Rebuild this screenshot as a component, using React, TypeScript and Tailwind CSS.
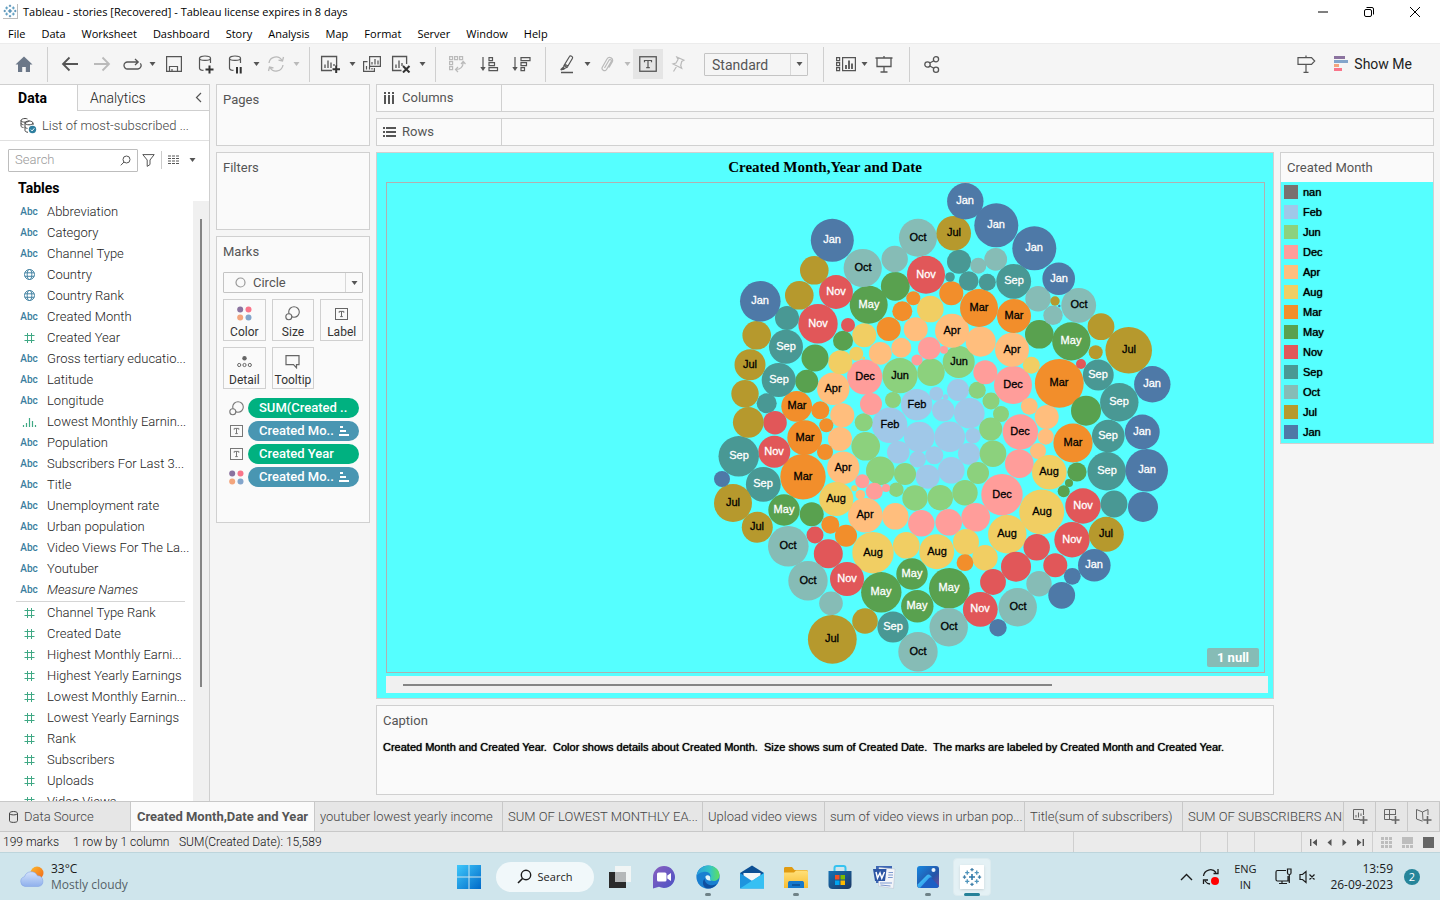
import type { ReactNode } from 'react';

type Month = 'nan' | 'Feb' | 'Jun' | 'Dec' | 'Apr' | 'Aug' | 'Mar' | 'May' | 'Nov' | 'Sep' | 'Oct' | 'Jul' | 'Jan';
type Bubble = [x: number, y: number, r: number, labelled?: 1];

const COLORS: Record<Month, string> = {
  nan: '#79706e', Feb: '#a0c8e8', Jun: '#8cd17d', Dec: '#ff9d9a', Apr: '#ffbe7d', Aug: '#f1ce63', Mar: '#f28e2b',
  May: '#59a14f', Nov: '#e15759', Sep: '#499894', Oct: '#86bcb6', Jul: '#b6992d', Jan: '#4e79a7',
};

const LIGHT_LABELS: Month[] = ['Jan', 'Nov', 'Sep', 'May'];

const BUBBLES: Partial<Record<Month, Bubble[]>> = {
  Feb: [
    [916.7, 404.7, 15.7, 1], [889.7, 425.3, 17.7, 1], [958, 390, 11], [936.3, 393.7, 7], [945.7, 397, 2.7], [943.3, 410.3, 11.2],
    [969.3, 413.3, 15.3], [949.7, 436.7, 15.3], [969, 453.7, 11], [973, 435.7, 7.7], [934.3, 455.3, 9], [951.3, 470.3, 13.3],
    [927.7, 476.7, 12], [919.3, 437, 15.3], [898.3, 452.3, 11.3], [917.7, 459.3, 8.3],
  ],
  Jun: [
    [900, 375.7, 17.6, 1], [931, 372.3, 13.7], [893, 400, 8], [863.7, 422.3, 9], [958.7, 362, 16, 1], [977.3, 390.3, 8.5],
    [991, 401, 8.5], [1001, 414, 8], [990.7, 429, 11.5], [993, 453.7, 13.3], [978, 473, 11], [965, 492.7, 12.7], [940.3, 497.7, 12.7],
    [865.7, 446.3, 14.3], [880.3, 470.7, 14.3], [905, 474, 11], [896.3, 489.7, 7.3], [915, 498, 12.7],
  ],
  Dec: [
    [864.7, 377, 17.6, 1], [917, 360, 5.6], [929.3, 348.3, 11.3], [944, 349.7, 4], [871, 404, 11], [985.3, 372.3, 12],
    [1013, 385, 19, 1], [1020.3, 432, 17.7, 1], [1019.3, 463.7, 14.3], [1002, 494.7, 20.7, 1], [975.7, 517.3, 14.3],
    [948.7, 522.3, 13.3], [862.3, 481.3, 7], [874.3, 491.3, 8.5], [886, 488, 4], [921.3, 523.3, 13.2],
  ],
  Apr: [
    [915.7, 329.3, 12], [901.3, 347.7, 10], [880.3, 353.3, 11.4], [833.3, 388.7, 16.2, 1], [842.3, 415.3, 12], [952, 330.7, 17, 1],
    [980.7, 341.7, 15], [1012, 349.7, 17, 1], [1029.3, 406.3, 8.4], [1046.7, 417, 12], [1045.7, 436.7, 8], [1038, 451, 8],
    [840, 439, 12], [843.3, 467.7, 16.2, 1], [860.3, 494.7, 4.8], [865.3, 515.3, 17.3, 1], [895.3, 516.3, 13.2],
  ],
  Aug: [
    [930.3, 309, 13.3], [864.3, 335.3, 12], [856.3, 353.7, 7], [863.7, 358, 1.5], [840.3, 362.3, 12], [1031.3, 365.3, 8.5],
    [1049.3, 472.3, 17.3, 1], [1041.7, 512, 22.5, 1], [1007.3, 534.3, 19.2, 1], [966, 542, 13], [985, 557.7, 12.7],
    [936.7, 551.7, 17.5, 1], [836.3, 499, 17.1, 1], [854.3, 488.3, 3], [873, 552.7, 20.7, 1], [906.3, 545.3, 13.3],
  ],
  Mar: [
    [913.3, 298.3, 7], [902.3, 311.3, 10], [888.7, 329, 12], [796.7, 406.3, 15.4, 1], [820.3, 410.3, 9], [826.3, 425.3, 7],
    [804.7, 437.7, 17.4, 1], [825, 452, 8], [803, 476.7, 22.7, 1], [830.3, 524.7, 9], [846, 535.7, 11], [951.3, 293.3, 12],
    [979, 308, 19, 1], [1014, 316, 17, 1], [1059.3, 383.3, 24.4, 1], [1073, 443, 19.6, 1], [965, 562.7, 8.4],
  ],
  May: [
    [868.7, 304.7, 19, 1], [895.3, 286.3, 14.4], [843, 340.7, 10], [815, 358, 13.5], [806.7, 381.3, 11.5], [1039.3, 334.3, 14.3],
    [1071.3, 341.3, 19.1, 1], [1086, 410.7, 15], [1077, 472, 9.6], [1069, 483, 4], [1063.7, 491.3, 6], [784, 510, 15.7, 1],
    [811.7, 514.3, 12], [912, 574, 15.7, 1], [881.3, 592.3, 20.2, 1], [917.3, 606.3, 16.2, 1], [949.3, 588.3, 20.3, 1],
  ],
  Nov: [
    [926, 274.7, 19, 1], [836, 292, 16.9, 1], [818, 323.7, 19.7, 1], [848, 325, 7], [775, 422.7, 11.8], [774.3, 451.7, 16, 1],
    [1081, 364, 5], [1083, 506, 17.7, 1], [1072, 539.7, 17.7, 1], [1036.7, 547.3, 13.2], [1016, 566.7, 15], [1055.3, 565.3, 12],
    [993, 582, 12.9], [980.3, 609.3, 17.4, 1], [815, 535, 8.5], [828.3, 553.7, 14.5], [847, 579, 17, 1],
  ],
  Sep: [
    [787, 318, 12], [786, 346.7, 17, 1], [778.7, 380, 17, 1], [766.7, 403.3, 10], [959, 261.7, 12], [950, 277, 4.8],
    [968.7, 281, 9.8], [987.3, 282.3, 8.5], [1013.7, 281.3, 17.4, 1], [1098.3, 375, 15.4, 1], [1119.3, 402.3, 19.2, 1],
    [1108.3, 436, 16.3, 1], [1106.7, 471.3, 19.2, 1], [1114, 504, 13.4], [738.7, 456.3, 20.2, 1], [763.3, 484.3, 17.4, 1], [893, 627, 15.6, 1],
  ],
  Oct: [
    [918, 237.7, 19, 1], [862.7, 268, 19.1, 1], [894.7, 259, 13.2], [978.3, 265.7, 8], [995.7, 259.3, 11.4], [1038, 298.7, 12.7],
    [1053, 315.3, 9.7], [1078.7, 305.3, 17.4, 1], [1039, 583.7, 12.7], [1017.7, 607.3, 19.2, 1], [948.7, 627.3, 19.2, 1],
    [788.3, 546.3, 20.3, 1], [808, 580.7, 19.7, 1], [831, 603.3, 11.8], [918, 651.7, 19.7, 1],
  ],
  Jul: [
    [814.3, 270.3, 14.3], [799.3, 295.3, 14.3], [756.7, 335.3, 14.3], [750, 364.7, 15.5, 1], [745, 393.7, 13.7], [748.3, 422.3, 15.4],
    [953.7, 233.3, 17.3, 1], [1055, 301, 4.7], [1101, 326.7, 13.4], [1095.7, 352.3, 7], [1128.7, 350.3, 23.3, 1], [1106.3, 534.3, 17.5, 1],
    [733, 503, 19, 1], [757.3, 527.3, 15.5, 1], [832.3, 639.3, 24.4, 1], [865, 621, 12.8],
  ],
  Jan: [
    [832.3, 240.3, 21.5, 1], [760.3, 301.3, 20.3, 1], [965.3, 201.3, 18.2, 1], [996.3, 225.3, 22, 1], [1034.3, 248.3, 22, 1],
    [1058.7, 278.7, 16.3, 1], [1059.3, 306, 1.2], [1152.3, 384.3, 18.2, 1], [1142.3, 432, 17.4, 1], [1146.7, 470.3, 21.3, 1],
    [1143, 507, 15], [1094.3, 565.3, 16.3, 1], [1072.3, 576.3, 8.4], [1061.7, 595.3, 13.4], [998, 627.7, 8.7], [722, 479, 8],
  ],
};

const MONTHS = Object.keys(COLORS) as Month[];

function BubbleChart() {
  const entries = MONTHS.flatMap((m) => (BUBBLES[m] ?? []).map((b) => ({ m, b })));
  return (
    <svg viewBox="387 183 877 489" preserveAspectRatio="xMidYMid meet" className="block h-full w-full" role="img" aria-label="Packed bubbles by created month">
      {entries.map(({ m, b }, i) => (
        <circle key={i} cx={b[0]} cy={b[1]} r={b[2]} fill={COLORS[m]} />
      ))}
      {entries.filter(({ b }) => b[3]).map(({ m, b }, i) => {
        const ink = LIGHT_LABELS.includes(m) ? '#ffffff' : '#000000';
        return (
          <text key={i} x={Math.round(b[0])} y={Math.round(b[1] + 3)} textAnchor="middle" fill={ink} stroke={ink} strokeWidth="0.3" className="text-[11px]">
            {m}
          </text>
        );
      })}
    </svg>
  );
}

function Ico({ w, h, children, className = '' }: { w: number; h: number; children: ReactNode; className?: string }) {
  return (
    <svg width={w} height={h} viewBox={`0 0 ${w} ${h}`} fill="none" stroke="currentColor" className={`shrink-0 ${className}`} aria-hidden="true">
      {children}
    </svg>
  );
}

const Caret = ({ className = 'text-[#555]' }: { className?: string }) => (
  <Ico w={7} h={4} className={className}><path d="M0.5 0h6L3.5 4z" fill="currentColor" stroke="none" /></Ico>
);

const TBox = ({ big = false }: { big?: boolean }) =>
  big ? (
    <Ico w={18} h={16}><rect x=".75" y=".75" width="16.5" height="14.5" strokeWidth="1.3" /><path d="M5.5 6.3V4.5h7v1.8M9 4.5v7M7.2 11.6h3.6" strokeWidth="1.2" /></Ico>
  ) : (
    <Ico w={13} h={12}><rect x=".5" y=".5" width="12" height="11" /><path d="M4.2 4.8V3.4h4.6v1.4M6.5 3.4v5.2M5.2 8.6h2.6" /></Ico>
  );

const SizeIcon = () => (
  <Ico w={15} h={15}><circle cx="9" cy="6" r="5.3" strokeWidth="1.1" /><circle cx="3.8" cy="10.8" r="3" fill="#fafafa" strokeWidth="1.1" /></Ico>
);

const ColorIcon = () => (
  <Ico w={15} h={15}>
    <g stroke="none"><circle cx="3.2" cy="3.5" r="3" fill="#8b739f" /><circle cx="11.5" cy="3.5" r="3" fill="#f9758a" /><circle cx="3.2" cy="11.5" r="3" fill="#f3a57d" /><circle cx="11.5" cy="11.5" r="3" fill="#83a5cb" /></g>
  </Ico>
);

function plus(x: number, y: number, s: number) {
  return `M${x - s} ${y}h${2 * s}M${x} ${y - s}v${2 * s}`;
}

const TableauMark = ({ size }: { size: number }) => (
  <svg width={size} height={size} viewBox="0 0 24 24" fill="none" aria-hidden="true">
    <path d={plus(12, 12, 3.6)} stroke="#2f78a8" strokeWidth="1.9" />
    <path d={plus(6.3, 6.8, 2.5) + plus(17.7, 6.8, 2.5) + plus(6.3, 17.2, 2.5) + plus(17.7, 17.2, 2.5)} stroke="#4f94bb" strokeWidth="1.6" />
    <path d={plus(12, 3.2, 2) + plus(12, 20.8, 2) + plus(3, 12, 2) + plus(21, 12, 2)} stroke="#3f7fa8" strokeWidth="1.5" />
  </svg>
);

function ToolButton({ label, wide = 'w-8', dim = false, active = false, children }: { label: string; wide?: string; dim?: boolean; active?: boolean; children: ReactNode }) {
  return (
    <button type="button" aria-label={label} className={`flex h-[30px] shrink-0 items-center justify-center ${wide} ${dim ? 'text-[#bababa]' : 'text-[#555]'} ${active ? 'bg-[#e5e5e5] text-[#333]' : ''}`}>
      {children}
    </button>
  );
}

const CaretButton = ({ label, dim = false, wide = 'w-3' }: { label: string; dim?: boolean; wide?: string }) => (
  <button type="button" aria-label={label} className={`flex h-[30px] shrink-0 items-center justify-center ${wide}`}>
    <Caret className={dim ? 'text-[#bababa]' : 'text-[#555]'} />
  </button>
);

const DbOutline = () => <path d="M12.5 8V3.2M12.5 3.2c0 1.2-2.4 2.1-5.5 2.1S1.5 4.4 1.5 3.2 3.9 1 7 1s5.5 1 5.5 2.2zM1.5 3.2v10c0 1.2 1.5 2 4 2.2" strokeWidth="1.2" />;

function Toolbar() {
  return (
    <div className="flex h-[41px] shrink-0 items-center border-t border-[#ececec] bg-[#f5f5f5]">
      <div className="flex h-[35px] w-12 items-center justify-center border-r border-[#cfcfcf]">
        <ToolButton label="Home"><Ico w={18} h={16} className="text-[#6b7788]"><path d="M9 .5 17.5 8.5H15V16h-4.2v-5H7.2v5H3V8.5H.5z" fill="currentColor" stroke="none" /></Ico></ToolButton>
      </div>
      <div className="flex h-[35px] items-center border-r border-[#cfcfcf] pr-[7px] pl-1.5">
        <ToolButton label="Undo"><Ico w={18} h={16}><path d="M17 8H2M8.5 1.5 2 8l6.5 6.5" strokeWidth="1.8" /></Ico></ToolButton>
        <ToolButton label="Redo" dim><Ico w={18} h={16}><path d="M1 8h15M9.500 1.500 16 8l-6.500 6.500" strokeWidth="1.8" /></Ico></ToolButton>
        <ToolButton label="Replay" wide="w-7"><Ico w={19} h={13}><path d="M7 11H4.500a3.500 3.500 0 0 1 0-7H15M12 1l3.200 3L12 7M17.300 5.300A3.500 3.500 0 0 1 15 11H6" strokeWidth="1.3" /></Ico></ToolButton>
        <CaretButton label="Replay options" />
        <ToolButton label="Save"><Ico w={16} h={16}><path d="M.6.600h14.800v14.800H.600zM3.500 15v-4.500h8V15M6 15v-2" strokeWidth="1.2" /></Ico></ToolButton>
        <ToolButton label="New data source"><Ico w={16} h={19}><DbOutline /><path d="M11.500 10.500v8M7.500 14.500h8" strokeWidth="2" stroke="#333" /></Ico></ToolButton>
        <ToolButton label="Pause auto updates" wide="w-7"><Ico w={16} h={19}><DbOutline /><path d="M9 12v6.500M12.700 12v6.500" strokeWidth="2" stroke="#333" /></Ico></ToolButton>
        <CaretButton label="Update options" />
        <ToolButton label="Run update" wide="w-7" dim><Ico w={18} h={16}><path d="M2 7a7 7 0 0 1 13-2.500M16 9a7 7 0 0 1-13 2.500M16.500 1l-1 4-4-.8M1.500 15l1-4 4 .8" strokeWidth="1.300" /></Ico></ToolButton>
        <CaretButton label="Run options" dim />
      </div>
      <div className="flex h-[35px] items-center border-r border-[#cfcfcf] pr-[7px] pl-1">
        <ToolButton label="New worksheet"><Ico w={20} h={18}><path d="M12 15.500H1.600V1.500h15V11M5 13V9.500M8 13V5.500M11 13V7.500M14 11V9" strokeWidth="1.300" /><path d="M16.200 10.500v7.500M12.500 14.300h7.500" strokeWidth="2" stroke="#333" /></Ico></ToolButton>
        <CaretButton label="New options" />
        <ToolButton label="Duplicate" wide="w-7"><Ico w={18} h={16}><path d="M6.600.600h10.800v9.800H6.600zM9 8.500V6M12 8.500V3M15 8.500V4.500" strokeWidth="1.200" /><path d="M4.500 5.600H.600v9.800h10.800V12M3.500 13.500V10M6.500 13.500V11M9 13.500V12" strokeWidth="1.200" /></Ico></ToolButton>
        <ToolButton label="Clear sheet" wide="w-[30px]"><Ico w={20} h={18}><path d="M10.500 15.500H1.600V1.500h14V9M5 13V9.500M8 13V5.500M11 11V8" strokeWidth="1.300" /><path d="M12 11l6.500 6.500M18.500 11 12 17.500" strokeWidth="2" stroke="#333" /></Ico></ToolButton>
        <CaretButton label="Clear options" />
      </div>
      <div className="flex h-[35px] items-center border-r border-[#cfcfcf] pr-2 pl-[5px]">
        <ToolButton label="Swap rows and columns" dim><Ico w={17} h={18}><path d="M.600 1.600h3v3h-3zM5.600 1.600h3v3h-3zM10.600 1.600h3v3h-3zM.600 6.600h3v3h-3zM.600 11.600h3v3h-3zM7 14.500c4-.2 7-2.500 7.200-7M12 9l2.200-2.500L16.500 9M9 12l-2.500 2.500L9 17" strokeWidth="1.200" /></Ico></ToolButton>
        <ToolButton label="Sort ascending"><Ico w={19} h={16}><path d="M3 1v12M9 1.600h3.500v3H9zM9 6.600h5.500v3H9zM9 11.600h8.500v3H9z" strokeWidth="1.200" /><path d="M.300 11h5.400L3 15z" fill="currentColor" stroke="none" /></Ico></ToolButton>
        <ToolButton label="Sort descending"><Ico w={19} h={16}><path d="M3 1v12M9 1.600h9v3H9zM9 6.600h5.500v3H9zM9 11.600h3.500v3H9z" strokeWidth="1.200" /><path d="M.300 11h5.400L3 15z" fill="currentColor" stroke="none" /></Ico></ToolButton>
      </div>
      <div className="flex h-[35px] items-center border-r border-[#cfcfcf] pr-[15px] pl-[7px]">
        <ToolButton label="Highlight" wide="w-7"><Ico w={14} h={19}><path d="M9.500 1.500 4 10.500l3.200 1.800L12.500 3.300c.8-1.600-2.200-3.300-3-1.800zM4 10.500 3.400 14l3.800-1.700M4.800 9.200 8 11" strokeWidth="1.200" /><path d="M.8 14.800 3.500 14l-.6-1.200zM1 17.500h12" strokeWidth="1.600" /></Ico></ToolButton>
        <CaretButton label="Highlight options" />
        <ToolButton label="Group members" wide="w-7" dim><Ico w={14} h={17}><path d="M4.500 12 9 4.200c1-1.500 3 0 2.200 1.400L6.500 13.500C5 16 1 14 2.300 11.300L7 3c2-3.200 7-.8 5.200 3L9 11.500" strokeWidth="1.200" /></Ico></ToolButton>
        <CaretButton label="Group options" dim />
        <ToolButton label="Show mark labels" wide="w-[30px]" active><TBox big /></ToolButton>
        <ToolButton label="Fix axes" wide="w-[30px]" dim><Ico w={14} h={16}><path d="M5.800 1 13 4.200l-2.300 1.300-1 4 1 2.800L2 8l3-.9L7 3.500zM6 9.800 2.500 15.500" strokeWidth="1.200" /></Ico></ToolButton>
        <div className="relative ml-[11px] h-[23px] w-[104px]">
          <select aria-label="Fit" className="h-full w-full appearance-none rounded-[1px] border border-[#c4c4c4] bg-[#f5f5f5] pl-[7px] text-[14px] leading-[20px] text-[#555]"><option>Standard</option></select>
          <span className="pointer-events-none absolute inset-y-px right-px flex w-[17px] items-center justify-center border-l border-[#d8d8d8]"><Caret /></span>
        </div>
      </div>
      <div className="flex h-[35px] items-center border-r border-[#cfcfcf] pr-[9px] pl-2">
        <ToolButton label="Show or hide cards" wide="w-7"><Ico w={20} h={16}><path d="M.600 1.600h3v3h-3zM.600 6.600h3v3h-3zM.600 11.600h3v3h-3zM6.600 1.600h12.800v13H6.600z" strokeWidth="1.200" /><path d="M10 13V9M13 13V4.500M16 13V7.500" strokeWidth="1.800" /></Ico></ToolButton>
        <CaretButton label="Card options" wide="w-2" />
        <ToolButton label="Presentation mode"><Ico w={18} h={17}><path d="M.5 2h17M2 2v8.500h14V2M9 0v2M9 10.500V16M5.500 16h7" strokeWidth="1.300" /></Ico></ToolButton>
      </div>
      <div className="flex items-center pl-1.5">
        <ToolButton label="Share"><Ico w={16} h={17}><circle cx="3.500" cy="8.500" r="2.700" strokeWidth="1.300" /><circle cx="12" cy="3.300" r="2.600" strokeWidth="1.300" /><circle cx="12" cy="13.700" r="2.600" strokeWidth="1.300" /><path d="m5.800 7 4-2.300M5.800 10l4 2.300" strokeWidth="1.300" /></Ico></ToolButton>
      </div>
      <div className="ml-auto flex items-center pr-7">
        <ToolButton label="Guide"><Ico w={19} h={18}><path d="M1 2.600h13.500L17.700 6l-3.200 3.400H1zM9 .5v2M9 9.400v7.600M6.500 17.400h5" strokeWidth="1.200" /></Ico></ToolButton>
        <button type="button" className="ml-3 flex items-center gap-1.5 text-[14px] leading-5 text-[#222]">
          <Ico w={14} h={16}><g stroke="none"><path d="M0 0h11v3H0z" fill="#8b739f" /><path d="M0 4h14v3H0z" fill="#83a5cb" /><path d="M0 8h5v3H0z" fill="#f3a57d" /><path d="M0 12h8v3H0z" fill="#f9758a" /></g></Ico>
          Show Me
        </button>
      </div>
    </div>
  );
}

type Kind = 'abc' | 'globe' | 'num' | 'bin';
const DIMENSIONS: [Kind, string][] = [
  ['abc', 'Abbreviation'], ['abc', 'Category'], ['abc', 'Channel Type'], ['globe', 'Country'], ['globe', 'Country Rank'],
  ['abc', 'Created Month'], ['num', 'Created Year'], ['abc', 'Gross tertiary educatio...'], ['abc', 'Latitude'], ['abc', 'Longitude'],
  ['bin', 'Lowest Monthly Earnin...'], ['abc', 'Population'], ['abc', 'Subscribers For Last 3...'], ['abc', 'Title'],
  ['abc', 'Unemployment rate'], ['abc', 'Urban population'], ['abc', 'Video Views For The La...'], ['abc', 'Youtuber'], ['abc', 'Measure Names'],
];
const MEASURES = ['Channel Type Rank', 'Created Date', 'Highest Monthly Earni...', 'Highest Yearly Earnings', 'Lowest Monthly Earnin...', 'Lowest Yearly Earnings', 'Rank', 'Subscribers', 'Uploads', 'Video Views'];

function KindIcon({ kind }: { kind: Kind }) {
  if (kind === 'abc') return <span className="text-[10px] font-medium text-[#3a7d9e]">Abc</span>;
  if (kind === 'globe') return <Ico w={11} h={11} className="text-[#4584a3]"><circle cx="5.500" cy="5.500" r="5" /><ellipse cx="5.500" cy="5.500" rx="2.300" ry="5" /><path d="M.8 3.800h9.400M.8 7.300h9.400" /></Ico>;
  if (kind === 'bin') return <Ico w={15} h={10} className="text-[#3fa884]"><path d="M1.500 8v2M4.500 6v4M7.500 1v9M10.500 4v6M13.500 8v2" strokeWidth="1.200" /></Ico>;
  return <Ico w={11} h={10} className="text-[#3fa884]"><path d="M3.500 0v10M7.500 0v10M.5 2.500h10M.5 7.500h10" /></Ico>;
}

function FieldRow({ kind, name }: { kind: Kind; name: string }) {
  return (
    <li className="flex h-[21px] items-center whitespace-nowrap">
      <span className="flex w-[18px] justify-center"><KindIcon kind={kind} /></span>
      <span className={`ml-[9px] ${name === 'Measure Names' ? 'italic' : ''}`}>{name}</span>
    </li>
  );
}

function DataPane() {
  return (
    <aside className="flex w-[210px] shrink-0 flex-col border-t border-r border-[#cfcfcf] bg-white text-[13px] leading-5 font-light text-[#222]">
      <div className="flex h-[26px] shrink-0">
        <button type="button" className="w-[77px] pr-3 text-[14px] font-bold text-black">Data</button>
        <div className="flex flex-1 items-center justify-between border-b border-l border-[#cfcfcf] bg-[#fafafa] pr-[7px] pl-3">
          <button type="button" className="text-[14px]">Analytics</button>
          <button type="button" aria-label="Collapse pane"><Ico w={7} h={11} className="text-[#555]"><path d="M6 1 1.500 5.500 6 10" strokeWidth="1.200" /></Ico></button>
        </div>
      </div>
      <div className="flex h-[30px] shrink-0 items-center border-b border-[#e0e0e0] pl-5 text-[#444]">
        <Ico w={17} h={17}><path d="M9 3.500C9 4.500 7.200 5.200 5 5.200S1 4.500 1 3.500 2.800 1.500 5 1.500c1.500 0 2 .3 2.500.5M1 3.500V9c0 .8 1 1.400 2.500 1.600M1 6.200c0 .8 1 1.400 2.500 1.600" /><path d="M13 6c0 1-1.800 1.800-4 1.800S5 7 5 6s1.800-2 4-2 4 1 4 2zM5 6v7.500c0 1 1.300 1.600 3 1.800M13 6v2M5 9.800c0 .9 1 1.400 2.500 1.600" /><circle cx="12.500" cy="12.500" r="3.700" fill="#2e7f9f" stroke="none" /><path d="m10.800 12.600 1.300 1.300 2.200-2.600" stroke="#fff" /></Ico>
        <span className="ml-[5px] whitespace-nowrap">List of most-subscribed ...</span>
      </div>
      <div className="mt-2 flex h-[22px] shrink-0 items-center pl-2">
        <label className="flex h-[23px] w-[130px] items-center rounded-[1px] border border-[#bdbdbd] pr-1.5 pl-1.5">
          <input aria-label="Search fields" placeholder="Search" className="w-full min-w-0 outline-none placeholder:text-[#999]" />
          <Ico w={11} h={11} className="text-[#555]"><circle cx="6.500" cy="4.500" r="3.500" /><path d="M4 7 .8 10.300" /></Ico>
        </label>
        <button type="button" aria-label="Filter fields" className="px-1"><Ico w={13} h={13} className="text-[#555]"><path d="M.8.600h11.400L8 6v4.500L5.200 12.400V6z" /></Ico></button>
        <span className="ml-0.5 h-[18px] border-l border-[#ccc]" />
        <button type="button" aria-label="View fields as" className="ml-1.5 flex items-center gap-[9px] text-[#555]">
          <Ico w={12} h={10}><path d="M0 1h12M0 3.500h12M0 6h12M0 8.500h12" strokeDasharray="3 1" /></Ico>
          <Caret />
        </button>
      </div>
      <h2 className="mt-1 h-[26px] shrink-0 pt-[3px] pl-[18px] text-[14px] font-bold text-black">Tables</h2>
      <div className="flex min-h-0 flex-1 overflow-hidden">
        <div className="min-w-0 flex-1 overflow-hidden">
          <ul className="pl-5">{DIMENSIONS.map(([k, n]) => <FieldRow key={n} kind={k} name={n} />)}</ul>
          <hr className="mt-px mr-2 ml-4 border-[#d5d5d5]" />
          <ul className="pl-5">{MEASURES.map((n) => <FieldRow key={n} kind="num" name={n} />)}</ul>
        </div>
        <div className="flex w-4 justify-center bg-[#f0f0f0] pt-[18px]"><span className="h-[468px] w-0.5 bg-[#858585]" /></div>
      </div>
    </aside>
  );
}

const CARD = 'border border-[#d0d0d0] bg-[#fafafa]';

function MarkButton({ label, children }: { label: string; children: ReactNode }) {
  return (
    <button type="button" className="flex h-[42px] flex-col items-center justify-between border border-[#d0d0d0] pt-1.5 pb-px text-[12px] leading-[14px] text-[#333]">
      <span className="flex h-[15px] items-center text-[#666]">{children}</span>
      {label}
    </button>
  );
}

function Pill({ icon, text, green = false }: { icon: ReactNode; text: string; green?: boolean }) {
  return (
    <li className="flex items-center gap-1">
      <span className="flex w-[15px] justify-center text-[#777]">{icon}</span>
      <span className={`flex h-5 flex-1 items-center rounded-full pl-[11px] text-[13px] leading-5 font-medium whitespace-nowrap text-white ${green ? 'bg-[#00b180]' : 'bg-[#4996b2]'}`}>
        {text}
        {!green && <Ico w={11} h={10} className="ml-[5px]"><path d="M1 1h3M1 5h6M0 9h10" strokeWidth="1.800" /></Ico>}
      </span>
    </li>
  );
}

function ShelfCards() {
  return (
    <div className="flex w-[154px] shrink-0 flex-col gap-1.5 text-[13px] leading-5 text-[#555]">
      <section className={`${CARD} h-[62px] px-1.5 pt-[5px]`}>Pages</section>
      <section className={`${CARD} h-[78px] px-1.5 pt-[5px]`}>Filters</section>
      <section className={`${CARD} h-[287px] px-1.5 pt-[5px]`}>
        <h2>Marks</h2>
        <div className="relative mt-2.5 flex h-[21px] w-[140px] items-center">
          <select aria-label="Mark type" className="h-full w-full appearance-none rounded-[1px] border border-[#c4c4c4] pl-[29px] text-[13px] leading-[18px] text-[#555]"><option>Circle</option></select>
          <Ico w={11} h={11} className="pointer-events-none absolute left-3 text-[#999]"><circle cx="5.500" cy="5.500" r="4.500" strokeWidth="1.200" /></Ico>
          <span className="pointer-events-none absolute inset-y-px right-px flex w-[17px] items-center justify-center border-l border-[#d8d8d8]"><Caret /></span>
        </div>
        <div className="mt-1.5 grid w-[140px] grid-cols-3 gap-1.5">
          <MarkButton label="Color"><ColorIcon /></MarkButton>
          <MarkButton label="Size"><SizeIcon /></MarkButton>
          <MarkButton label="Label"><TBox /></MarkButton>
          <MarkButton label="Detail"><Ico w={15} h={12}><circle cx="7.500" cy="2.200" r="2.200" fill="currentColor" stroke="none" /><circle cx="2.200" cy="9" r="1.600" /><circle cx="7.500" cy="9" r="1.600" /><circle cx="12.800" cy="9" r="1.600" /></Ico></MarkButton>
          <MarkButton label="Tooltip"><Ico w={15} h={14}><path d="M1 .600h13v9h-2.500v3.200L8.500 9.600H1z" strokeWidth="1.200" /></Ico></MarkButton>
        </div>
        <ul className="mt-[9px] ml-1.5 flex w-[130px] flex-col gap-[3px]">
          <Pill icon={<SizeIcon />} text="SUM(Created .." green />
          <Pill icon={<TBox />} text="Created Mo.." />
          <Pill icon={<TBox />} text="Created Year" green />
          <Pill icon={<ColorIcon />} text="Created Mo.." />
        </ul>
      </section>
    </div>
  );
}

function Shelf({ name, icon }: { name: string; icon: ReactNode }) {
  return (
    <div className={`${CARD} flex h-7 shrink-0 text-[13px] leading-5 text-[#555]`}>
      <div className="flex w-[125px] items-center gap-1.5 border-r border-[#d0d0d0] pl-1.5">{icon}{name}</div>
    </div>
  );
}

function Workspace() {
  return (
    <main className="flex min-w-0 flex-1 flex-col gap-1.5">
      <Shelf name="Columns" icon={<Ico w={13} h={12}><path d="M2 0v2M6 0v2M10 0v2M2 3v9M6 3v9M10 3v9" strokeWidth="2" /></Ico>} />
      <Shelf name="Rows" icon={<Ico w={13} h={10}><path d="M0 1h2M0 5h2M0 9h2M3 1h10M3 5h10M3 9h10" strokeWidth="2" /></Ico>} />
      <div className="flex min-h-0 flex-1 items-start gap-1.5">
        <div className="flex h-full min-w-0 flex-1 flex-col gap-1.5 pb-1.5">
          <section className="flex min-h-0 flex-1 flex-col border border-[#d0d0d0] bg-[#55ffff] pr-[5px] pl-[9px]">
            <h1 className="h-[29px] shrink-0 pt-1 pr-1 text-center font-['Liberation_Serif',serif] text-[15px] leading-5 font-bold text-black">Created Month,Year and Date</h1>
            <div className="relative mr-[3px] min-h-0 flex-1 border border-[#b0b0b0]">
              <BubbleChart />
              <button type="button" className="absolute right-[5px] bottom-[5px] h-[19px] w-[52px] rounded-[2px] bg-[#86bcb6] text-[13px] leading-[19px] font-bold text-white">1 null</button>
            </div>
            <div className="mt-[3px] mb-[5px] flex h-[17px] shrink-0 items-center bg-[#f0f0f0] pl-[17px]"><span className="h-0.5 w-3/4 bg-[#858585]" /></div>
          </section>
          <section className={`${CARD} h-[90px] shrink-0 px-1.5 pt-[5px]`}>
            <h2 className="text-[13px] leading-5 text-[#555]">Caption</h2>
            <p className="mt-2 text-[11px] leading-4 whitespace-pre text-black [text-shadow:0_0_1px_currentColor]">Created Month and Created Year.  Color shows details about Created Month.  Size shows sum of Created Date.  The marks are labeled by Created Month and Created Year.</p>
          </section>
        </div>
        <section className={`${CARD} w-[154px] shrink-0`}>
          <h2 className="h-[29px] pt-[5px] pl-1.5 text-[13px] leading-5 text-[#555]">Created Month</h2>
          <ul className="bg-[#55ffff] pb-px">
            {MONTHS.map((m) => (
              <li key={m} className="flex h-5 items-center gap-[5px] pl-[3px] text-[11px] leading-4 text-black [text-shadow:0_0_1px_currentColor]">
                <span className="size-3.5" style={{ backgroundColor: COLORS[m] }} />{m}
              </li>
            ))}
          </ul>
        </section>
      </div>
    </main>
  );
}

const SHEETS: [string, string][] = [
  ['youtuber lowest yearly income', 'w-[188px]'], ['SUM OF LOWEST MONTHLY EA...', 'w-[200px]'], ['Upload video views', 'w-[122px]'],
  ['sum of video views in urban pop...', 'w-[200px]'], ['Title(sum of subscribers)', 'w-[158px]'],
];

function SheetTabs() {
  const icon = 'flex w-8 shrink-0 items-center justify-center border-r border-[#c8c8c8] text-[#666]';
  return (
    <nav className="flex h-[31px] shrink-0 border-y border-[#c8c8c8] bg-[#e6e6e6] text-[13px] leading-5 font-light text-[#444]">
      <button type="button" className="flex w-[131px] shrink-0 items-center gap-1.5 border-r border-[#c8c8c8] pl-[9px]">
        <Ico w={9} h={12}><path d="M8.500 2.300c0 1-1.800 1.600-4 1.600s-4-.600-4-1.600S2.300.500 4.500.500s4 .8 4 1.800zM.5 2.300v7.500c0 .9 1.500 1.600 4 1.600s4-.7 4-1.600V2.300" /></Ico>
        Data Source
      </button>
      <button type="button" className="w-[184px] shrink-0 border-r border-[#c8c8c8] bg-[#fafafa] text-center font-bold whitespace-nowrap text-[#555]">Created Month,Date and Year</button>
      {SHEETS.map(([name, w]) => (
        <button type="button" key={name} className={`shrink-0 overflow-hidden border-r border-[#c8c8c8] pl-[5px] text-left whitespace-nowrap ${w}`}>{name}</button>
      ))}
      <button type="button" className="min-w-0 flex-1 overflow-hidden border-r border-[#c8c8c8] pl-[5px] text-left whitespace-nowrap">SUM OF SUBSCRIBERS AND</button>
      <button type="button" aria-label="New worksheet" className={icon}><Ico w={16} h={15}><path d="M8 10.500H1.500v-10h10V6M4 8.500V6M6.500 8.500V3.500M9 7V4.500" /><path d="M11.500 7v8M7.500 11h8" strokeWidth="1.600" /></Ico></button>
      <button type="button" aria-label="New dashboard" className={icon}><Ico w={16} h={15}><path d="M8 10.500H.500v-10h11V6M5.500.500v10M.5 5.500h11" /><path d="M11.500 7v8M7.500 11h8" strokeWidth="1.600" /></Ico></button>
      <button type="button" aria-label="New story" className={icon}><Ico w={16} h={15}><path d="M7 11.500 6.500 3 .500.500v9.500l6 2.200M6.500 3 12 .500V6" /><path d="M11.500 7v8M7.500 11h8" strokeWidth="1.600" /></Ico></button>
    </nav>
  );
}

function StatusBar() {
  const cell = 'h-full shrink-0 border-l border-[#cfcfcf]';
  return (
    <div className="flex h-5 shrink-0 items-center bg-[#ebebeb] text-[12px] leading-4 font-light text-[#111]">
      <span className="w-[70px] shrink-0 pl-[3px]">199 marks</span>
      <span className="w-[106px] shrink-0 pl-[3px]">1 row by 1 column</span>
      <span className="pl-[3px]">SUM(Created Date): 15,589</span>
      <span className="flex-1" />
      <span className={`${cell} w-[127px]`} /><span className={`${cell} w-[27px]`} /><span className={`${cell} w-[27px]`} /><span className={`${cell} w-[47px]`} />
      <div className={`${cell} flex w-[71px] items-center justify-between px-2 text-[#555]`}>
        <button type="button" aria-label="First sheet"><Ico w={7} h={7}><path d="M7 0v7L2.500 3.500zM0 0h1.400v7H0z" fill="currentColor" stroke="none" /></Ico></button>
        <button type="button" aria-label="Previous sheet"><Ico w={5} h={7}><path d="M4.500 0v7L.5 3.500z" fill="currentColor" stroke="none" /></Ico></button>
        <button type="button" aria-label="Next sheet"><Ico w={5} h={7}><path d="M.5 0v7l4-3.500z" fill="currentColor" stroke="none" /></Ico></button>
        <button type="button" aria-label="Last sheet"><Ico w={7} h={7}><path d="M0 0v7l4.500-3.500zM5.600 0H7v7H5.600z" fill="currentColor" stroke="none" /></Ico></button>
      </div>
      <div className={`${cell} flex w-[68px] items-center justify-between pr-1.5 pl-2 text-[#bdbdbd]`}>
        <button type="button" aria-label="Show sheet sorter"><Ico w={11} h={11}><path d="M0 1.500h11M0 5.500h11M0 9.500h11" strokeWidth="3" strokeDasharray="3 1" /></Ico></button>
        <button type="button" aria-label="Show filmstrip"><Ico w={11} h={11}><path d="M0 3.500h11" strokeWidth="7" /><path d="M0 9.500h11" strokeWidth="3" strokeDasharray="3 1" /></Ico></button>
        <button type="button" aria-label="Show tabs"><Ico w={11} h={11} className="text-[#666]"><path d="M0 0h11v11H0z" fill="currentColor" stroke="none" /></Ico></button>
      </div>
    </div>
  );
}

function App24({ label, open = false, children }: { label: string; open?: boolean; children: ReactNode }) {
  return (
    <button type="button" aria-label={label} className="relative flex h-12 w-11 shrink-0 items-center justify-center">
      <svg width="24" height="24" viewBox="0 0 24 24" aria-hidden="true">{children}</svg>
      {open && <span className="absolute bottom-[5px] h-[3px] w-1.5 rounded-full bg-[#6f8287]" />}
    </button>
  );
}

function Taskbar() {
  return (
    <footer className="flex h-12 shrink-0 items-center border-t border-[#bdd5dc] bg-[#cfe5ec] font-['Open_Sans','Noto_Sans',sans-serif] text-[12px] leading-4 text-[#1b1b1b]">
      <svg width="0" height="0" className="absolute" aria-hidden="true">
        <defs>
          <linearGradient id="win" x1="0" y1="0" x2="1" y2="1"><stop stopColor="#3fc8fb" /><stop offset="1" stopColor="#0069c8" /></linearGradient>
          <linearGradient id="cloud" x1="0" y1="0" x2="0" y2="1"><stop stopColor="#d3e2fb" /><stop offset="1" stopColor="#8fb0ec" /></linearGradient>
          <linearGradient id="sun" x1="0" y1="0" x2="1" y2="1"><stop stopColor="#fdb92c" /><stop offset="1" stopColor="#f0661a" /></linearGradient>
          <linearGradient id="chat" x1="0" y1="0" x2="1" y2="1"><stop stopColor="#8a5fc0" /><stop offset="1" stopColor="#4a52c4" /></linearGradient>
          <linearGradient id="edgeTop" x1="0" y1="0" x2="1" y2="0"><stop stopColor="#2a9fe0" /><stop offset=".6" stopColor="#35c6c2" /><stop offset="1" stopColor="#5fe05a" /></linearGradient>
          <linearGradient id="folder" x1="0" y1="0" x2="0" y2="1"><stop stopColor="#ffe07a" /><stop offset="1" stopColor="#f8bd31" /></linearGradient>
          <linearGradient id="store" x1="0" y1="0" x2="1" y2="1"><stop stopColor="#1571b4" /><stop offset="1" stopColor="#1d3763" /></linearGradient>
          <linearGradient id="photo" x1="0" y1="0" x2="1" y2="1"><stop stopColor="#1788e0" /><stop offset=".6" stopColor="#2454a8" /><stop offset="1" stopColor="#7b4c9c" /></linearGradient>
          <linearGradient id="ridge" x1="0" y1="0" x2="1" y2="1"><stop stopColor="#4fd8ff" /><stop offset="1" stopColor="#1f7ae0" /></linearGradient>
        </defs>
      </svg>
      <div className="flex flex-1 items-center gap-[7px] pl-5">
        <svg width="24" height="22" viewBox="0 0 24 22" aria-hidden="true">
          <circle cx="17" cy="7" r="6.500" fill="url(#sun)" />
          <path d="M5 20.500a5 5 0 0 1-.5-9.800A7 7 0 0 1 17.500 9.800a5.400 5.400 0 0 1 1 10.700z" fill="url(#cloud)" stroke="#85a5e6" strokeWidth=".6" />
        </svg>
        <div><div>33°C</div><div className="text-[#556268]">Mostly cloudy</div></div>
      </div>
      <div className="flex items-center">
        <App24 label="Start"><path d="M0 0h11.500v11.500H0zM12.500 0H24v11.500H12.500zM0 12.500h11.500V24H0zM12.500 12.500H24V24H12.500z" fill="url(#win)" /></App24>
        <button type="button" className="mr-1 ml-[5px] flex h-[30px] w-[98px] items-center justify-center gap-1.5 rounded-full bg-[#f1f8fa] text-[11px]">
          <Ico w={15} h={15}><circle cx="9" cy="6" r="4.700" strokeWidth="1.400" /><path d="M5.500 9.500 1 14" strokeWidth="1.600" /></Ico>Search
        </button>
        <App24 label="Task view"><path d="M1 7h17v16H1z" fill="#2b2b2b" /><path d="M7 1h16v16H7z" fill="#f4f6f6" opacity=".9" /><path d="M7 7h11v10H7z" fill="#b5b8b9" /></App24>
        <App24 label="Chat"><path d="M12 1a11 11 0 1 1-5 20.800L1 23.500V12A11 11 0 0 1 12 1z" fill="url(#chat)" /><rect x="5" y="7.500" width="9.500" height="9" rx="1.500" fill="#fff" /><path d="M15.300 10.500 19 8v8l-3.700-2.500z" fill="#fff" /></App24>
        <App24 label="Edge" open><circle cx="12" cy="12" r="11.600" fill="#1a7fd0" /><path d="M.6 11C1.500 4.500 6.500.400 12.500.400c6.500 0 11 4.600 11 9.600 0 4-3 6-6 6-2.500 0-4.300-1-3.600-2.300 1.800-3 .2-7-4.400-7C5 6.700 1.500 9 .600 11z" fill="url(#edgeTop)" /><path d="M8.500 13.500c0 4.500 4.500 7.300 8 6.800 1.500-.2 3-.8 4.500-1.800-2 3.300-5.300 5.100-9 5.100-5-.6-6.500-6.600-3.500-10.100z" fill="#0f4fa0" /><path d="M9.500 11.200c1.600-2 5-1 4.700 1.700-.4 1-.3 2 .8 2.600-3 .5-6-1.500-5.500-4.300z" fill="#e2f3f8" /></App24>
        <App24 label="Mail"><path d="M0 8 12 .500 24 8v5H0z" fill="#0c4f94" /><path d="M3.500 8h17v7h-17z" fill="#f4f7f9" /><path d="M0 8l12 8L24 8v15.500H0z" fill="#1e94de" /><path d="M24 8 0 23.500h24z" fill="#37c0f3" /></App24>
        <App24 label="File Explorer" open><path d="M0 3.500C0 2.500.5 2 1.500 2H8l2.500 3H22c1 0 2 .5 2 1.500V12H0z" fill="#e09b12" /><path d="M0 7.500h10l2-2h10c1.200 0 2 .6 2 1.700V23H0z" fill="url(#folder)" /><path d="M4 23v-5c0-1.500 1-2 2-2h12c1 0 2 .5 2 2v5z" fill="#1578cc" /><path d="M8 20h8" stroke="#0a4d90" strokeWidth="1.500" /></App24>
        <App24 label="Microsoft Store"><path d="M6.500 6V3c0-1.300.7-2 2-2h7c1.300 0 2 .7 2 2v3" fill="none" stroke="#35c3f0" strokeWidth="2" /><path d="M.5 6h23v14c0 2.500-1.500 4-4 4h-15c-2.500 0-4-1.500-4-4z" fill="url(#store)" /><path d="M7 10h4.500v4.500H7z" fill="#f25022" /><path d="M12.500 10H17v4.500h-4.500z" fill="#7fba00" /><path d="M7 15.500h4.500V20H7z" fill="#00a4ef" /><path d="M12.500 15.500H17V20h-4.500z" fill="#ffb900" /></App24>
        <App24 label="Word"><path d="M4 1h16v17H4z" fill="#3e67b4" /><path d="m7 2.500 16 1.500-1.500 19.500-15-2.500z" fill="#f3f5f9" stroke="#b8c0d0" strokeWidth=".5" /><path d="M16.500 7.500h4.500M16.300 10H21M16 12.500h4.700M8 18h12M8.500 20l10 1" stroke="#7d99cf" /><path d="M1 4h13.500l-1.500 12H3z" fill="#2c55a4" /><path d="m4 7 1.500 6L8 8l1.800 5.200L12.500 7" fill="none" stroke="#fff" strokeWidth="1.500" /></App24>
        <App24 label="Photos" open><rect x="1" y="1" width="22" height="22" rx="3" fill="url(#photo)" /><circle cx="17.500" cy="5" r="2" fill="#e8f2fb" /><path d="M4 23 11 11.500c1-1.300 2-1.300 3 0l9 9.500c-.3 1.300-1.300 2-3 2z" fill="#1d5fc4" /><path d="M1.500 19.500 10.500 10.500c1.200-1.200 2.800-1.200 4 0l2 2.200c-1.400-.7-2.600-.4-3.600.6L4 23c-1.500 0-3-1.500-2.500-3.500z" fill="url(#ridge)" /></App24>
        <button type="button" aria-label="Tableau" className="relative flex h-12 w-11 shrink-0 items-center justify-center">
          <span className="flex h-[38px] w-[38px] items-center justify-center rounded-[4px] border border-[#dcebef] bg-[#e4f1f5]"><span className="bg-white p-0.5 shadow"><TableauMark size={20} /></span></span>
          <span className="absolute bottom-[5px] h-[3px] w-4 rounded-full bg-[#258198]" />
        </button>
      </div>
      <div className="flex flex-1 items-center justify-end pr-5">
        <button type="button" aria-label="Hidden icons"><Ico w={13} h={8}><path d="M1 7l5.500-5.500L12 7" strokeWidth="1.400" /></Ico></button>
        <button type="button" aria-label="Updates" className="ml-[9px]"><Ico w={18} h={18}><path d="M1.500 8a7 7 0 0 1 12.500-3.500M16 1v4.500h-4.500M8 16a7 7 0 0 1-5-3M1.500 16v-4H6" strokeWidth="1.300" /><circle cx="13" cy="13" r="4" fill="#f00" stroke="none" /></Ico></button>
        <button type="button" className="ml-[11px] w-[28px] text-center text-[11px]">ENG<br />IN</button>
        <button type="button" aria-label="Network" className="ml-4"><Ico w={17} h={17}><path d="M11 2.500H2.500c-1 0-1.500.5-1.500 1.500v7.500c0 1 .5 1.500 1.500 1.500h10.500V8M7 13v2.500M4 15.500h8M12.500 1h3.500v4c0 1-.5 1.500-1.700 1.500S12.500 6 12.500 5zM14.300 6.500V15" strokeWidth="1.200" /></Ico></button>
        <button type="button" aria-label="Sound" className="ml-[7px]"><Ico w={16} h={14}><path d="M1 4.500h2.500L7 1.500v11L3.500 9.500H1zM10.500 4.500l5 5M15.500 4.500l-5 5" strokeWidth="1.200" /></Ico></button>
        <button type="button" className="ml-[15px] text-right">13:59<br />26-09-2023</button>
        <button type="button" aria-label="Notifications" className="ml-[11px] size-4 rounded-full bg-[#26859a] text-[11px] leading-4 text-white">2</button>
      </div>
    </footer>
  );
}

const MENUS = ['File', 'Data', 'Worksheet', 'Dashboard', 'Story', 'Analysis', 'Map', 'Format', 'Server', 'Window', 'Help'];

export default function App() {
  return (
    <div className="flex h-screen w-full flex-col overflow-hidden bg-[#f5f5f5] font-['Liberation_Sans',sans-serif]">
      <header className="shrink-0 bg-white font-['Open_Sans','Noto_Sans',sans-serif] text-[11px] leading-4 text-black">
        <div className="flex h-[23px] items-center pl-[3px]">
          <span className="border-r border-b border-[#bbb]"><TableauMark size={14} /></span>
          <span className="ml-[5px]">Tableau - stories [Recovered] - Tableau license expires in 8 days</span>
          <div className="ml-auto flex items-center gap-9 pr-5">
            <button type="button" aria-label="Minimize"><Ico w={10} h={10}><path d="M0 5h10" /></Ico></button>
            <button type="button" aria-label="Restore"><Ico w={10} h={10}><rect x=".5" y="2.500" width="7" height="7" rx="1.500" /><path d="M2.500.500H8A1.500 1.500 0 0 1 9.500 2v5.500" /></Ico></button>
            <button type="button" aria-label="Close"><Ico w={10} h={10}><path d="m0 0 10 10M10 0 0 10" /></Ico></button>
          </div>
        </div>
        <div className="flex h-5 items-center gap-4 pt-0.5 pl-2">
          {MENUS.map((m) => <button type="button" key={m}>{m}</button>)}
        </div>
      </header>
      <div className="flex min-h-0 flex-1 flex-col font-[Roboto,sans-serif]">
        <Toolbar />
        <div className="flex min-h-0 flex-1 gap-1.5 overflow-hidden pr-1.5">
          <DataPane />
          <ShelfCards />
          <div className="flex min-w-0 flex-1 font-[Roboto,sans-serif] [&_li]:font-['Liberation_Sans',sans-serif] [&_p]:font-['Liberation_Sans',sans-serif] [&_text]:font-['Liberation_Sans',sans-serif]">
            <Workspace />
          </div>
        </div>
        <SheetTabs />
        <StatusBar />
      </div>
      <Taskbar />
    </div>
  );
}
